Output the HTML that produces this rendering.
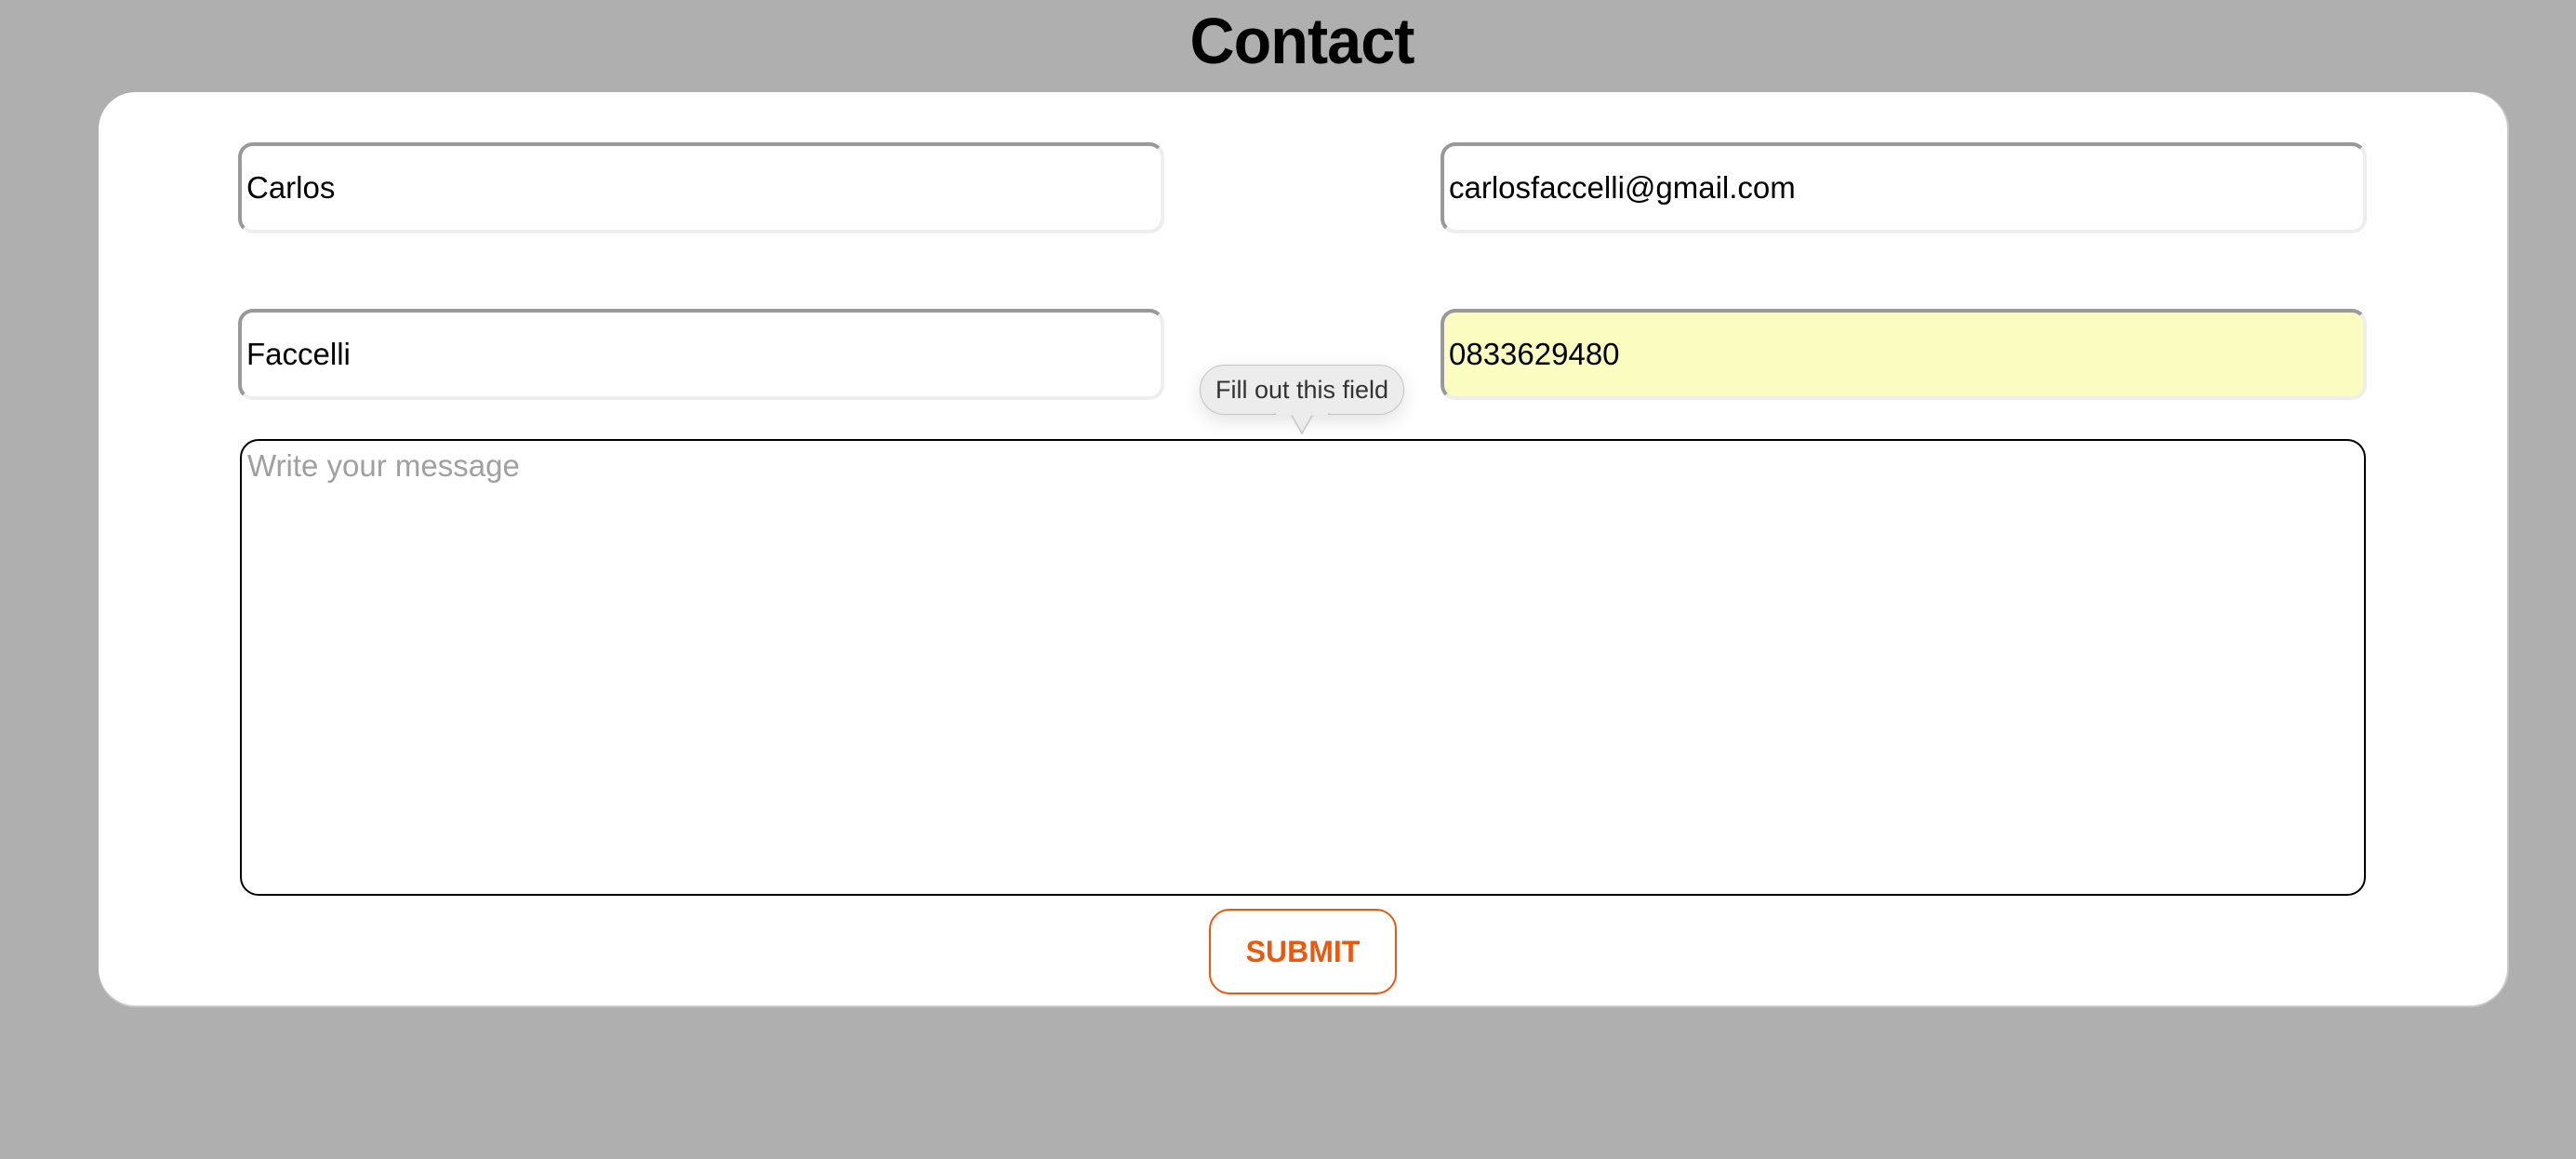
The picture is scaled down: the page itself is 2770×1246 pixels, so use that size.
<!DOCTYPE html>
<html><head><meta charset="utf-8"><style>
html,body{margin:0;padding:0}
body{width:2770px;height:1246px;background:#afafaf;position:relative;overflow:hidden;font-family:"Liberation Sans",sans-serif}
h1{position:absolute;left:15px;width:2770px;top:8px;margin:0;text-align:center;font-size:70px;font-weight:bold;color:#000;line-height:72px;letter-spacing:-1px;transform:scaleX(0.95)}
.card{position:absolute;left:106px;top:99px;width:2590px;height:982px;background:#fff;border-radius:40px;box-shadow:0 2px 0 #c8c8c8,2px 0 0 #c8c8c8}
.in{position:absolute;box-sizing:border-box;height:98px;width:996px;border-radius:16px;border:4px solid;border-color:#999 #eee #eee #999;font-size:33px;color:#000;padding-left:5px;line-height:90px;background:#fff}
.ta{position:absolute;left:258px;top:472px;width:2286px;height:491px;box-sizing:border-box;border:2px solid #000;border-radius:20px;font-size:33px;color:#a0a0a0;padding:8px 0 0 6px}
.tip{position:absolute;left:1290px;top:392px;width:220px;height:54px;box-sizing:border-box;border:1.5px solid #c4c4c4;background:#ececec;border-radius:27px;font-size:27px;color:#333;text-align:center;line-height:52px;box-shadow:0 6px 20px rgba(0,0,0,.12)}
.btn{position:absolute;left:1300px;top:977px;width:202px;height:92px;box-sizing:border-box;border:2px solid #e85a10;border-radius:22px;color:#e85a10;font-weight:bold;font-size:32px;text-align:center;line-height:88px}
</style></head><body>
<h1>Contact</h1>
<div class="card"></div>
<div class="in" style="left:256px;top:153px">Carlos</div>
<div class="in" style="left:1549px;top:153px">carlosfaccelli@gmail.com</div>
<div class="in" style="left:256px;top:332px">Faccelli</div>
<div class="in" style="left:1549px;top:332px;background:#fafcc0">0833629480</div>
<div class="ta">Write your message</div>
<div class="tip">Fill out this field</div>
<svg style="position:absolute;left:1368px;top:444px" width="64" height="26"><path d="M2 1 L20 1 L32 22 L44 1 L62 1 Z" fill="#ececec" stroke="none"/><path d="M2 1 L20 1 L32 22 L44 1 L62 1" fill="none" stroke="#c4c4c4" stroke-width="1.5"/><rect x="4" y="0" width="56" height="2.5" fill="#ececec"/></svg>
<div class="btn">SUBMIT</div>
</body></html>
